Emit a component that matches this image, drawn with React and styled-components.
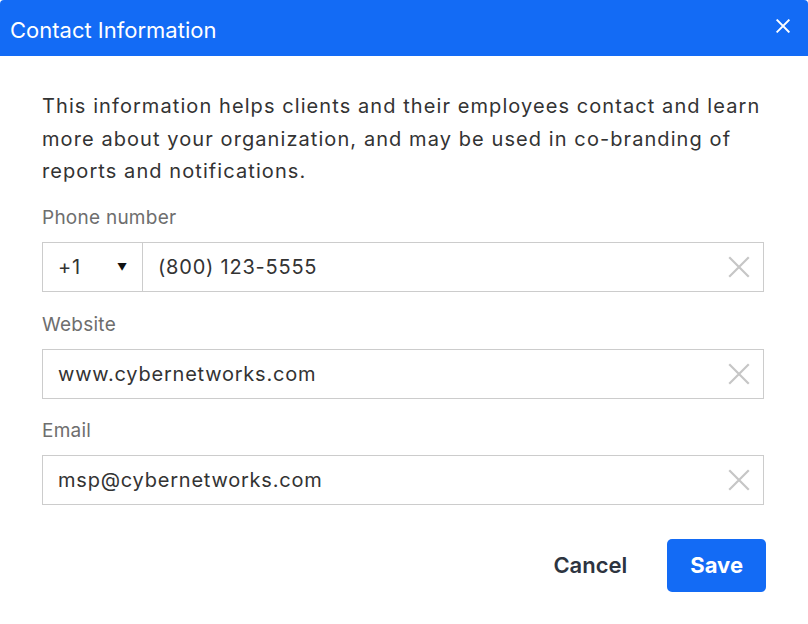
import React, { useState } from "react";
import styled, { createGlobalStyle } from "styled-components";

const Global = createGlobalStyle`
  * { box-sizing: border-box; }
  body {
    margin: 0;
    background: #ffffff;
    font-family: Inter, "Noto Sans", Arial, sans-serif;
  }
`;

const Modal = styled.div`
  width: 808px;
  height: 624px;
  background: #fff;
  display: flex;
  flex-direction: column;
  border-radius: 4px 4px 0 0;
  overflow: hidden;
`;

const Header = styled.div`
  height: 56px;
  flex-shrink: 0;
  background: #136bf5;
  display: flex;
  align-items: center;
  justify-content: space-between;
  padding: 4px 18px 0 10px;
`;

const Title = styled.h2`
  margin: 0;
  color: #fff;
  font-size: 22px;
  font-weight: 400;
`;

const CloseButton = styled.button`
  border: 0;
  background: none;
  padding: 0;
  display: flex;
  color: #fff;
  cursor: pointer;
  margin-top: -8px;
`;

const Body = styled.div`
  padding: 34px 44px 0 42px;
  display: flex;
  flex-direction: column;
`;

const Intro = styled.p`
  margin: 0;
  font-size: 20px;
  line-height: 32.5px;
  color: #333;
  letter-spacing: 1.08px;
`;

const Field = styled.div`
  display: flex;
  flex-direction: column;
  margin-top: ${(p) => p.$top}px;
`;

const Label = styled.label`
  font-size: 19px;
  line-height: 20px;
  color: #6e6e6e;
  letter-spacing: 0.25px;
  margin-bottom: 14px;
`;

const InputBox = styled.div`
  height: 50px;
  border: 1px solid #cccccc;
  display: flex;
  align-items: stretch;
  background: #fff;
`;

const CountrySelect = styled.div`
  width: 100px;
  flex-shrink: 0;
  border-right: 1px solid #cccccc;
  display: flex;
  align-items: center;
  justify-content: space-between;
  padding: 0 14px 0 15px;
  font-size: 20px;
  letter-spacing: 0.8px;
  color: #333;
`;

const Caret = styled.span`
  font-size: 10px;
  color: #111;
`;

const TextInput = styled.input`
  flex: 1;
  min-width: 0;
  border: 0;
  outline: none;
  font-family: inherit;
  font-size: 20px;
  letter-spacing: 0.78px;
  color: #333;
  padding: 0 15px;
  background: transparent;
`;

const ClearButton = styled.button`
  border: 0;
  background: none;
  padding: 0 13px 0 8px;
  display: flex;
  align-items: center;
  color: #c6c6c6;
  cursor: pointer;
`;

const Footer = styled.div`
  display: flex;
  justify-content: flex-end;
  align-items: center;
  gap: 40px;
  margin-top: 34px;
  margin-right: -2px;
`;

const Button = styled.button`
  font-family: inherit;
  font-size: 22px;
  font-weight: ${(p) => (p.$primary ? 700 : 600)};
  height: 53px;
  padding: 0 ${(p) => (p.$primary ? 23 : 0)}px;
  border: 0;
  border-radius: 5px;
  background: ${(p) => (p.$primary ? "#136bf5" : "transparent")};
  color: ${(p) => (p.$primary ? "#fff" : "#2d3440")};
  cursor: pointer;
`;

const XIcon = ({ size = 22, stroke = 2.2 }) => (
  <svg width={size} height={size} viewBox="0 0 22 22" fill="none">
    <path d="M2 2 L20 20 M20 2 L2 20" stroke="currentColor" strokeWidth={stroke} strokeLinecap="square" />
  </svg>
);

function Input({ value, onChange }) {
  return (
    <>
      <TextInput value={value} onChange={(e) => onChange(e.target.value)} />
      <ClearButton onClick={() => onChange("")}>
        <XIcon />
      </ClearButton>
    </>
  );
}

export default function App() {
  const [phone, setPhone] = useState("(800) 123-5555");
  const [site, setSite] = useState("www.cybernetworks.com");
  const [email, setEmail] = useState("msp@cybernetworks.com");

  return (
    <Modal>
      <Global />
      <Header>
        <Title>Contact Information</Title>
        <CloseButton>
          <XIcon size={14} stroke={3} />
        </CloseButton>
      </Header>
      <Body>
        <Intro>
          This information helps clients and their employees contact and learn
          more about your organization, and may be used in co-branding of
          reports and notifications.
        </Intro>
        <Field $top={20}>
          <Label>Phone number</Label>
          <InputBox>
            <CountrySelect>
              +1 <Caret>▼</Caret>
            </CountrySelect>
            <Input value={phone} onChange={setPhone} />
          </InputBox>
        </Field>
        <Field $top={23}>
          <Label>Website</Label>
          <InputBox>
            <Input value={site} onChange={setSite} />
          </InputBox>
        </Field>
        <Field $top={22}>
          <Label>Email</Label>
          <InputBox>
            <Input value={email} onChange={setEmail} />
          </InputBox>
        </Field>
        <Footer>
          <Button>Cancel</Button>
          <Button $primary>Save</Button>
        </Footer>
      </Body>
    </Modal>
  );
}
